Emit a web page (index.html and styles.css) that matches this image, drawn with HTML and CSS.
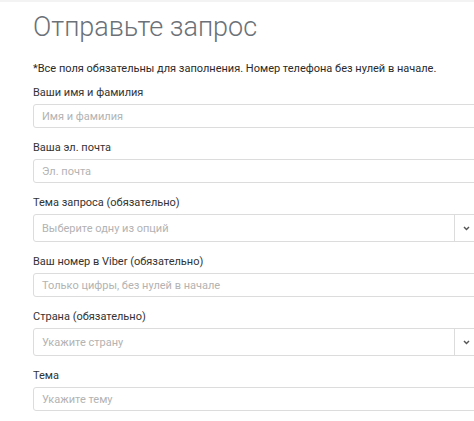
FILE: index.html
```html
<!DOCTYPE html>
<html lang="ru">
<head>
<meta charset="utf-8">
<link rel="stylesheet" href="styles.css">
</head>
<body>
<div class="topline"></div>
<main class="page">
  <h1 class="title">Отправьте запрос</h1>
  <p class="note">*Все поля обязательны для заполнения. Номер телефона без нулей в начале.</p>
  <div class="group">
    <label class="label">Ваши имя и фамилия</label>
    <div class="field"><span class="ph">Имя и фамилия</span></div>
  </div>
  <div class="group">
    <label class="label">Ваша эл. почта</label>
    <div class="field"><span class="ph">Эл. почта</span></div>
  </div>
  <div class="group">
    <label class="label">Тема запроса (обязательно)</label>
    <div class="field select"><span class="ph">Выберите одну из опций</span><span class="caret"><svg width="7" height="5" viewBox="0 0 7 5"><path d="M1 1 L3.5 3.6 L6 1" fill="none" stroke="#555" stroke-width="1.4"/></svg></span></div>
  </div>
  <div class="group">
    <label class="label">Ваш номер в Viber (обязательно)</label>
    <div class="field"><span class="ph">Только цифры, без нулей в начале</span></div>
  </div>
  <div class="group">
    <label class="label">Страна (обязательно)</label>
    <div class="field select"><span class="ph">Укажите страну</span><span class="caret"><svg width="7" height="5" viewBox="0 0 7 5"><path d="M1 1 L3.5 3.6 L6 1" fill="none" stroke="#555" stroke-width="1.4"/></svg></span></div>
  </div>
  <div class="group">
    <label class="label">Тема</label>
    <div class="field"><span class="ph">Укажите тему</span></div>
  </div>
</main>
</body>
</html>
```

FILE: styles.css
```css
html, body {
  margin: 0;
  padding: 0;
  overflow: hidden;
  background: #fff;
}
body {
  font-family: Roboto, "Noto Sans", sans-serif;
  color: #333;
}
.topline {
  height: 2px;
  background: #f3f3f3;
}
.page {
  padding: 9px 0 0 33px;
  width: 445px;
}
.title {
  margin: 0;
  font-size: 27px;
  font-weight: 300;
  line-height: 32px;
  color: #6b7177;
}
.note {
  margin: 19px 0 0;
  font-size: 11px;
  line-height: 14px;
  color: #2a2a2a;
}
.group {
  display: flex;
  flex-direction: column;
  margin-top: 10px;
}
.group + .group {
  margin-top: 13px;
}
.label {
  font-size: 11px;
  line-height: 14px;
  color: #333;
  margin-bottom: 4px;
}
.field {
  display: flex;
  align-items: center;
  height: 24px;
  border: 1px solid #dcdcdc;
  border-radius: 3px;
  padding-left: 8px;
  box-sizing: border-box;
}
.field.select {
  height: 28px;
}
.ph {
  flex: 1;
  font-size: 11px;
  color: #b3b3b3;
}
.caret {
  width: 22px;
  height: 100%;
  border-left: 1px solid #dcdcdc;
  display: flex;
  align-items: center;
  justify-content: center;
}
.caret svg {
  display: block;
}
```
